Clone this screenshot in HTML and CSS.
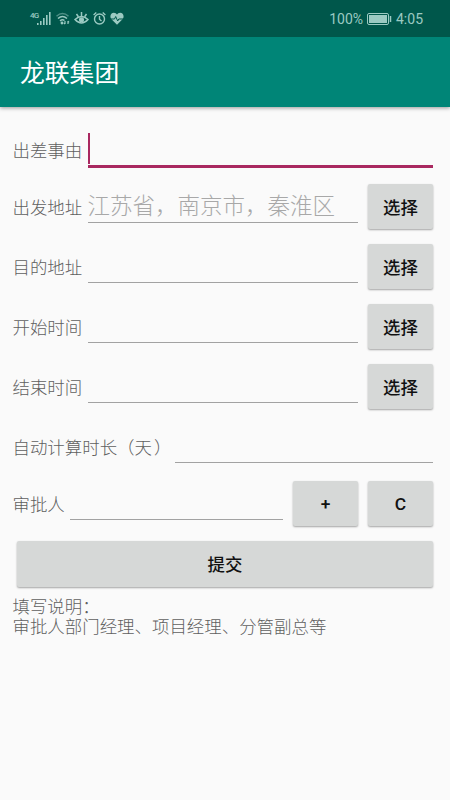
FILE: index.html
```html
<!DOCTYPE html>
<html lang="zh-CN">
<head>
<meta charset="utf-8">
<title>龙联集团</title>
<link rel="stylesheet" href="styles.css">
</head>
<body>
<header class="status">
  <div class="status-left">
    <span class="net">4G</span>
    <svg class="signal" width="14" height="13" viewBox="0 0 14 13" fill="currentColor"><path d="M0 11h1.6v2H0zM3 9h1.6v4H3zM6 6h1.6v7H6zM9 3h1.6v10H9zM12 0h1.6v13H12z"/></svg>
    <svg class="wifi" width="14" height="13" viewBox="0 0 14 13" fill="none" stroke="currentColor" stroke-width="1.5"><path d="M.5 4.2Q6.500-1.200 12.500 4.200" opacity=".5"/><path d="M2 6.500Q6.500 2.500 11 6.500M4 8.800Q6.500 6.800 8.500 8.500"/><circle cx="6" cy="11" r=".7" fill="currentColor"/><path d="M9 9v3M8 10.800l1 1.300M12 12V9M13 10.300 12 9" stroke-width="1.200"/></svg>
    <svg class="eye" width="15" height="13" viewBox="0 0 15 13" fill="none" stroke="currentColor" stroke-width="1.500"><path d="M1 7.500Q7.500 1.500 14 7.500 7.500 14.500 1 7.500ZM7.500 0v4M2.500 2l1.700 2.500M12.500 2l-1.700 2.500"/><circle cx="7.500" cy="7.700" r="1.800" fill="currentColor"/></svg>
    <svg class="alarm" width="13" height="13" viewBox="0 0 13 13" fill="none" stroke="currentColor" stroke-width="1.400"><circle cx="6.500" cy="7" r="5"/><path d="M6.500 4v3.300l2 1.700M.6 3 3.300.6M12.400 3 9.700.6"/></svg>
    <svg class="heart" width="14" height="13" viewBox="0 0 14 13"><path fill="currentColor" d="M7 12.800 1.500 7.300C-.8 4.500.8.700 3.900.7 5.400.7 6.400 1.500 7 2.600 7.600 1.500 8.600.7 10.100.7c3.100 0 4.700 3.800 2.400 6.600Z"/><path d="M0 7h4.500l1.200-2.500 2 4.500 1.100-2H14" fill="none" stroke="#00574b"/></svg>
  </div>
  <div class="status-right">
    <span>100%</span>
    <svg class="battery" width="25" height="12" viewBox="0 0 25 12" fill="none" stroke="currentColor"><rect x=".5" y=".5" width="21" height="11" rx="1.500"/><rect x="2" y="2" width="18" height="8" fill="currentColor" stroke="none"/><path d="M23.500 3v6" stroke-width="1.500"/></svg>
    <span>4:05</span>
  </div>
</header>
<div class="appbar"><h1>龙联集团</h1></div>
<main class="form">
  <div class="row row-first"><label>出差事由</label><div class="field focused"><span class="caret"></span></div></div>
  <div class="row"><label>出发地址</label><div class="field">江苏省，南京市，秦淮区</div><button>选择</button></div>
  <div class="row"><label>目的地址</label><div class="field"></div><button>选择</button></div>
  <div class="row"><label>开始时间</label><div class="field"></div><button>选择</button></div>
  <div class="row"><label>结束时间</label><div class="field"></div><button>选择</button></div>
  <div class="row row-short"><label class="duration">自动计算时长（天<span class="mark">）</span></label><div class="field"></div></div>
  <div class="row"><label class="approver">审批人</label><div class="field"></div><button>+</button><button>C</button></div>
  <button class="submit">提交</button>
  <p class="note">填写说明：<br>审批人部门经理、项目经理、分管副总等</p>
</main>
</body>
</html>
```
FILE: styles.css
```css
* { box-sizing: border-box; }

body {
  margin: 0;
  height: 800px;
  overflow: hidden;
  background: #fafafa;
  color: #5f5f5f;
  font-family: Roboto, "Noto Sans CJK SC", sans-serif;
  font-size: 17.45px;
}

.status {
  position: relative;
  z-index: 1;
  display: flex;
  justify-content: space-between;
  height: 37px;
  padding: 0 27px 0 30px;
  background: #00574b;
  color: #9bcac2;
}

.status-left { display: flex; padding-top: 12px; }
.status-left svg { flex: none; }
.net { width: 7px; font-size: 8px; line-height: 7px; font-weight: 500; letter-spacing: -.8px; }
.wifi { margin-left: 5px; }
.eye { margin-left: 4px; }
.alarm { margin-left: 4px; }
.heart { margin-left: 4px; }

.status-right { display: flex; align-items: center; padding-top: 1px; font-size: 14px; }
.battery { margin: 0 4px; }

.appbar {
  display: flex;
  align-items: center;
  height: 70px;
  padding: 4px 20px 0;
  background: #008577;
  color: #fff;
  box-shadow: 0 1px 4px rgba(0, 0, 0, .4);
}

h1 { margin: 0; font-size: 24.8px; line-height: 36px; font-weight: 400; }

.form { padding: 13px 17px 0 12.5px; }

.row { display: flex; align-items: flex-start; height: 60px; }
.row-first, .row-short { height: 57px; }

label { flex: none; width: 70px; margin-right: 5px; line-height: 62px; font-weight: 300; white-space: nowrap; }
.duration { width: 157px; }
.approver { width: 52px; }
.mark { margin-left: 2px; }

.field {
  flex: 1;
  height: 46px;
  padding-top: 13px;
  border-bottom: 1px solid #a2a2a2;
  color: #a8a8a8;
  font-size: 22.5px;
  line-height: 33px;
  font-weight: 300;
  white-space: nowrap;
}

.focused { height: 48px; border-bottom: 3px solid #a92860; }
.caret { display: block; width: 2px; height: 31px; background: #a92860; }

button {
  flex: none;
  width: 65px;
  height: 45px;
  margin: 7px 0 0 10px;
  padding: 0;
  border: 0;
  border-radius: 2px;
  background: #d6d8d7;
  box-shadow: 0 1px 2px rgba(0, 0, 0, .35);
  color: #111;
  font-family: inherit;
  font-size: 17.4px;
  font-weight: 500;
}

.submit { display: block; width: 416px; height: 46px; margin: 7px 0 0 4.5px; padding-bottom: 2px; }

.note { margin: 10px 0 0; line-height: 20px; font-weight: 300; }
```
